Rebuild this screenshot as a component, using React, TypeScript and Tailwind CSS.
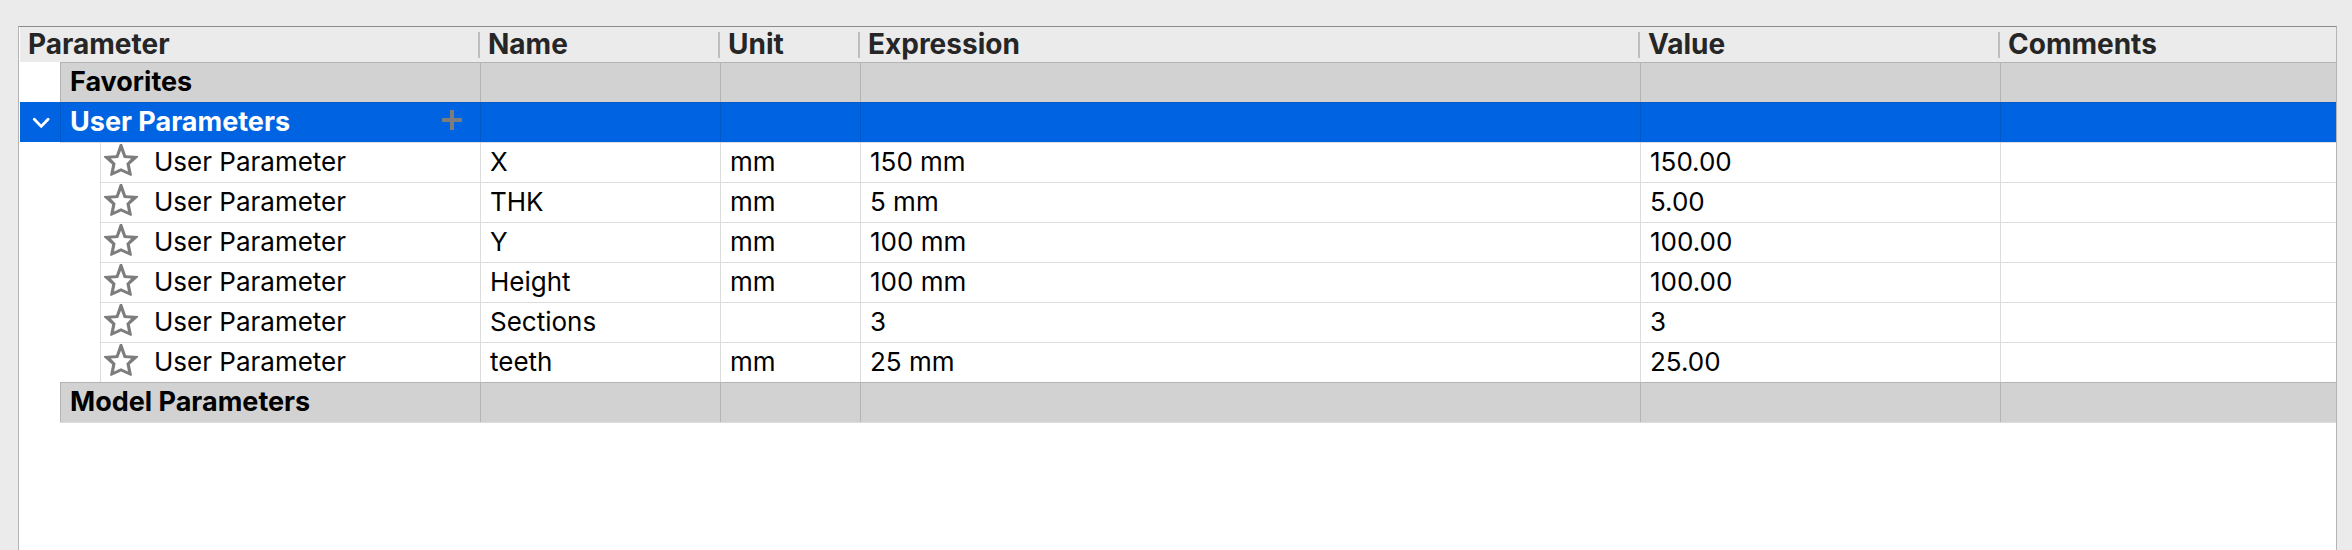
import type { ReactNode } from "react";

type Parameter = { name: string; unit: string; expression: string; value: string };

const parameters: Parameter[] = [
  { name: "X", unit: "mm", expression: "150 mm", value: "150.00" },
  { name: "THK", unit: "mm", expression: "5 mm", value: "5.00" },
  { name: "Y", unit: "mm", expression: "100 mm", value: "100.00" },
  { name: "Height", unit: "mm", expression: "100 mm", value: "100.00" },
  { name: "Sections", unit: "", expression: "3", value: "3" },
  { name: "teeth", unit: "mm", expression: "25 mm", value: "25.00" },
];

const columns = ["Parameter", "Name", "Unit", "Expression", "Value", "Comments"];

function StarIcon() {
  return (
    <svg viewBox="0 0 34 32" className="h-8 w-[34px]" fill="#7d7d7d" fillRule="evenodd" aria-hidden="true">
      <path d="M15.9 0H18.1L22 11.2L34 12.1V13.2L25.8 20.4L28 31.2L27 32L17 27.6L7 32L6 31.2L8.2 20.4L0 13.2V12.1L12 11.2ZM17 6.6L14.2 14L6.8 14.6L11.6 19.4L10 27.4L17 24.2L24 27.4L22.4 19.4L27.2 14.6L19.8 14Z" />
    </svg>
  );
}

function ChevronIcon() {
  return (
    <svg viewBox="0 0 18 12" className="h-3 w-[18px]" fill="none" stroke="#ffffff" strokeWidth="2.8" strokeLinecap="round" strokeLinejoin="round" aria-hidden="true">
      <path d="M2.3 2.2 L9.2 9.4 L16.1 2.2" />
    </svg>
  );
}

function PlusIcon() {
  return (
    <svg viewBox="0 0 20 20" className="h-5 w-5" fill="#7d7d7d" aria-hidden="true">
      <path d="M8 0h4v8h8v4h-8v8h-4v-8H0V8h8z" />
    </svg>
  );
}

function GroupRow({ title, selected, toggle, action }: { title: string; selected?: boolean; toggle?: ReactNode; action?: ReactNode }) {
  const line = selected ? "border-[#0057c8]" : "border-[#b4b4b4]";
  const fill = selected ? "bg-[#0063e1]" : "bg-[#d2d2d2]";
  return (
    <tr className={selected ? "text-white" : "text-black"}>
      <th scope="rowgroup" className="p-0 text-left text-[27px] font-bold">
        <div className="flex h-10">
          <div className={`flex w-10 items-center justify-center pt-0.5 pl-0.5 ${selected ? "bg-[#0063e1]" : ""}`}>{toggle}</div>
          <div className={`flex flex-1 items-center justify-between border-t border-l pr-[18px] pb-0.5 pl-[9px] ${line} ${fill}`}>
            {title}
            {action}
          </div>
        </div>
      </th>
      {columns.slice(1).map((column) => (
        <td key={column} className={`border-t border-l p-0 ${line} ${fill}`} />
      ))}
    </tr>
  );
}

function ParameterRow({ parameter, first }: { parameter: Parameter; first: boolean }) {
  const cell = "border-t border-l border-[#dcdcdc] pt-0 pr-0 pb-0.5 pl-[9px]";
  return (
    <tr>
      <td className="p-0">
        <div className="flex h-10 pl-10">
          <div className={first ? "w-10 border-t border-[#dcdcdc]" : "w-10"} />
          <div className="flex flex-1 items-center gap-4 border-t border-l border-[#dcdcdc] pb-0.5 pl-[3px]">
            <button type="button" aria-label={`Favorite ${parameter.name}`} className="-mt-1">
              <StarIcon />
            </button>
            User Parameter
          </div>
        </div>
      </td>
      <td className={cell}>{parameter.name}</td>
      <td className={cell}>{parameter.unit}</td>
      <td className={cell}>{parameter.expression}</td>
      <td className={cell}>{parameter.value}</td>
      <td className={cell} />
    </tr>
  );
}

export default function App() {
  return (
    <div className="flex min-h-screen flex-col bg-[#ebebeb] pt-[26px] pr-[15px] pl-[18px] font-['Inter',sans-serif] text-[26px] leading-8 text-black">
      <main className="flex-1 border-x border-t border-x-[#b4b4b4] border-t-[#8c8c8c] bg-white pl-px">
        <table className="w-full table-fixed border-separate border-spacing-0">
          <colgroup>
            <col className="w-[460px]" />
            <col className="w-60" />
            <col className="w-[140px]" />
            <col className="w-[780px]" />
            <col className="w-[360px]" />
            <col />
          </colgroup>
          <thead>
            <tr className="bg-[#ebebeb] text-[28px] text-[#262626]">
              {columns.map((column) => (
                <th key={column} scope="col" className="group h-[35px] p-0 text-left font-bold">
                  <div className="flex h-[35px] items-center justify-between">
                    <span className="pb-0.5 pl-2">{column}</span>
                    <span className="h-[26px] w-0.5 bg-[#bebebe] group-last:hidden" />
                  </div>
                </th>
              ))}
            </tr>
          </thead>
          <tbody>
            <GroupRow title="Favorites" />
            <GroupRow
              title="User Parameters"
              selected
              toggle={
                <button type="button" aria-label="Collapse User Parameters">
                  <ChevronIcon />
                </button>
              }
              action={
                <button type="button" aria-label="Add user parameter" className="-mt-1">
                  <PlusIcon />
                </button>
              }
            />
            {parameters.map((parameter, index) => (
              <ParameterRow key={parameter.name} parameter={parameter} first={index === 0} />
            ))}
            <GroupRow title="Model Parameters" />
          </tbody>
        </table>
        <div className="ml-10 border-t border-[#dcdcdc]" />
      </main>
    </div>
  );
}
